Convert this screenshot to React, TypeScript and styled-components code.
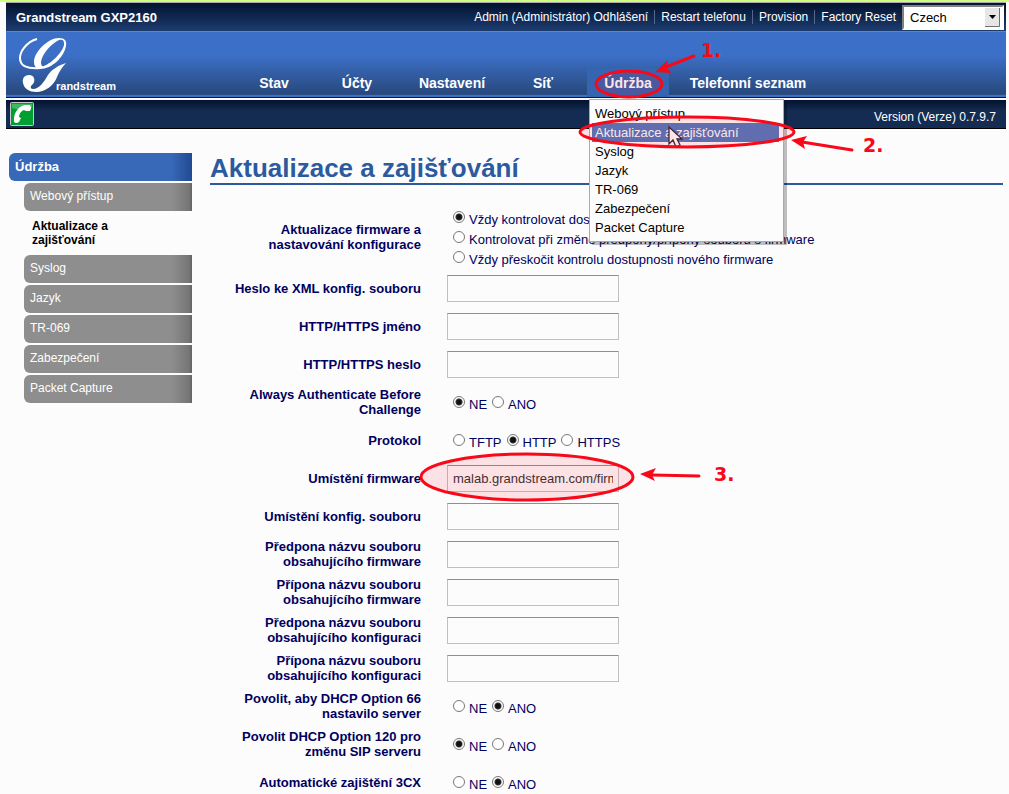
import React from 'react';
import styled, { createGlobalStyle } from 'styled-components';

const Global = createGlobalStyle`
  * { box-sizing: border-box; }
  body { margin: 0; background: #fcfcfc; font-family: "Liberation Sans", Arial, sans-serif; font-size: 13px; line-height: 15px; color: #000060; }
  button, input, select { font: inherit; }
`;

const Page = styled.div`
  position: relative;
  height: 100vh;
  overflow: hidden;
  padding: 0 3px 0 6px;
  border-top: 2px solid #ccff80;
`;

const TopBar = styled.header`
  display: flex;
  align-items: center;
  height: 29px;
  padding: 0 2px 0 10px;
  border-top: 1px solid #b0a8b0;
  color: #fff;
  background: linear-gradient(#03122e, #1c3c70);
`;

const Model = styled.strong`
  flex: 1;
`;

const TopLinks = styled.nav`
  display: flex;
  align-items: center;
  font-size: 12px;
  margin-right: 6px;
`;

const TopLink = styled.a`
  color: #fff;
  line-height: 14px;
  text-decoration: none;
  & + & { margin-left: 6px; padding-left: 6px; border-left: 1px solid #55688a; }
`;

const LanguageBox = styled.div`
  display: grid;
  grid-template-columns: 1fr 17px;
  align-items: center;
  width: 102px;
  height: 25px;
  border: 2px solid;
  border-color: #808080 #fff #fff #808080;
  background: #fff;
`;

const Language = styled.select`
  grid-area: 1 / 1 / 2 / 3;
  appearance: none;
  height: 21px;
  padding: 0 6px;
  border: 0;
  border-radius: 0;
  background: transparent;
  color: #000;
`;

const DropArrow = styled.svg`
  grid-area: 1 / 2;
  display: block;
  width: 15px;
  height: 19px;
  pointer-events: none;
`;

const NavBar = styled.div`
  display: flex;
  align-items: flex-end;
  height: 67px;
  border-top: 1px solid #5585d8;
  border-bottom: 1px solid #081838;
  background: linear-gradient(#3c70c8 0%, #3c70c8 35%, #28487c 96%, #3c70c8 97%);
`;

const Logo = styled.svg`
  display: block;
  width: 110px;
  height: 65px;
`;

const Tabs = styled.nav`
  display: flex;
  margin-left: 123px;
`;

const TabWrap = styled.div`
  position: relative;
`;

const Tab = styled.button<{ $w: number; $open?: boolean }>`
  width: ${p => p.$w}px;
  height: 29px;
  padding: 2px 0 0;
  border: 0;
  color: #fff;
  font-size: 14px;
  font-weight: bold;
  background: ${p => (p.$open ? '#3565b0' : 'transparent')};
`;

const Menu = styled.ul`
  position: absolute;
  z-index: 2;
  top: 31px;
  left: 2px;
  width: 195px;
  margin: 0;
  padding: 4px 4px 4px 2px;
  list-style: none;
  border: 1px solid #aaa;
  background: #fcfcfc;
  box-shadow: 3px 3px 0 rgba(0, 0, 0, 0.25);
`;

const MenuLink = styled.a<{ $active?: boolean }>`
  display: block;
  padding: 0 3px;
  line-height: 19px;
  text-decoration: none;
  color: ${p => (p.$active ? '#fff' : '#000')};
  background: ${p => (p.$active ? '#4f7ac0' : 'transparent')};
`;

const StatusBar = styled.div`
  display: flex;
  align-items: center;
  justify-content: space-between;
  height: 29px;
  margin-top: 2px;
  padding: 0 10px 0 4px;
  color: #fff;
  border-bottom: 1px solid #000;
  background: linear-gradient(#03122e, #152c52 40%);
`;

const Version = styled.span`
  padding-top: 6px;
  font-size: 12px;
`;

const Body = styled.div`
  display: flex;
  padding: 24px 3px 0;
`;

const Side = styled.aside`
  flex: none;
  width: 183px;
  margin-right: 18px;
`;

const SideTitle = styled.h2`
  margin: 0 0 2px;
  padding: 0 6px;
  font-size: 13px;
  line-height: 28px;
  color: #fff;
  border-radius: 6px 0 0 6px;
  background: linear-gradient(90deg, #3868b8 89%, #214a90);
`;

const SideLink = styled.a<{ $current?: boolean }>`
  display: block;
  margin: 0 0 2px 15px;
  font-size: 12px;
  text-decoration: none;
  ${p => p.$current
    ? 'padding: 6px 60px 6px 8px; font-weight: bold; line-height: 14px; color: #000;'
    : 'padding: 0 6px 2px; line-height: 26px; color: #fff; border-radius: 6px 0 0 6px; border-right: 2px solid #686868; background: linear-gradient(90deg, #8e8e8e 89%, #747474);'}
`;

const Main = styled.main`
  flex: 1;
  min-width: 0;
`;

const Title = styled.h1`
  margin: 0 0 23px;
  font-size: 26px;
  line-height: 30px;
  color: #2c5a9f;
  border-bottom: 2px solid #2c5a9f;
`;

const Row = styled.div<{ $tall?: boolean }>`
  display: grid;
  grid-template-columns: 211px 1fr;
  column-gap: 26px;
  align-items: center;
  min-height: ${p => (p.$tall ? 61 : 38)}px;
`;

const Label = styled.label<{ $tall?: boolean }>`
  padding-bottom: ${p => (p.$tall ? 4 : 0)}px;
  text-align: right;
  font-weight: bold;
`;

const Field = styled.input`
  width: 172px;
  height: 27px;
  padding: 0 5px;
  border: 1px solid #c0c0c0;
  border-top-color: #909090;
  border-radius: 0;
  background: #fcfcfc;
  color: #333;
`;

const Choices = styled.div<{ $column?: boolean }>`
  display: flex;
  flex-direction: ${p => (p.$column ? 'column' : 'row')};
  column-gap: 5px;
  padding: ${p => (p.$column ? 0 : 4)}px 0 0 6px;
`;

const Choice = styled.label`
  display: flex;
  align-items: flex-start;
  height: 20px;
  line-height: 22px;
  white-space: nowrap;
`;

const Radio = styled.input`
  appearance: none;
  width: 12px;
  height: 12px;
  margin: 2px 4px 0 0;
  border: 1px solid #777;
  border-radius: 50%;
  background: #fff;
  &:checked { background: radial-gradient(circle, #111 0 2px, #333 3px, #fff 4px); }
`;

const Marks = styled.svg`
  position: absolute;
  z-index: 3;
  top: -2px;
  left: 0;
  width: 900px;
  height: 520px;
  pointer-events: none;
`;

const menu = ['Webový přístup', 'Aktualizace a zajišťování', 'Syslog', 'Jazyk', 'TR-069', 'Zabezpečení', 'Packet Capture'];

type Item = { label: string; id: string; value?: string; options?: string[]; checked?: number; column?: boolean };

const rows: Item[] = [
  { id: 'upgrade', label: 'Aktualizace firmware a nastavování konfigurace', column: true, checked: 0, options: ['Vždy kontrolovat dostupnost nového firmware', 'Kontrolovat při změně předpony/přípony souborů s firmware', 'Vždy přeskočit kontrolu dostupnosti nového firmware'] },
  { id: 'xml', label: 'Heslo ke XML konfig. souboru' },
  { id: 'user', label: 'HTTP/HTTPS jméno' },
  { id: 'pass', label: 'HTTP/HTTPS heslo' },
  { id: 'auth', label: 'Always Authenticate Before Challenge', options: ['NE', 'ANO'], checked: 0 },
  { id: 'protocol', label: 'Protokol', options: ['TFTP', 'HTTP', 'HTTPS'], checked: 1 },
  { id: 'fw', label: 'Umístění firmware', value: 'malab.grandstream.com/firmware' },
  { id: 'cfg', label: 'Umístění konfig. souboru' },
  { id: 'fwpre', label: 'Předpona názvu souboru obsahujícího firmware' },
  { id: 'fwpost', label: 'Přípona názvu souboru obsahujícího firmware' },
  { id: 'cfgpre', label: 'Předpona názvu souboru obsahujícího konfiguraci' },
  { id: 'cfgpost', label: 'Přípona názvu souboru obsahujícího konfiguraci' },
  { id: 'dhcp66', label: 'Povolit, aby DHCP Option 66 nastavilo server', options: ['NE', 'ANO'], checked: 1 },
  { id: 'dhcp120', label: 'Povolit DHCP Option 120 pro změnu SIP serveru', options: ['NE', 'ANO'], checked: 0 },
  { id: 'auto3cx', label: 'Automatické zajištění 3CX', options: ['NE', 'ANO'], checked: 1 },
];

export default function App() {
  return (
    <>
      <Global />
      <Page>
        <TopBar>
          <Model>Grandstream GXP2160</Model>
          <TopLinks>
            <TopLink href="#logout">Admin (Administrátor) Odhlášení</TopLink>
            <TopLink href="#restart">Restart telefonu</TopLink>
            <TopLink href="#provision">Provision</TopLink>
            <TopLink href="#reset">Factory Reset</TopLink>
          </TopLinks>
          <LanguageBox>
            <Language aria-label="Language"><option>Czech</option></Language>
            <DropArrow viewBox="0 0 15 19" aria-hidden="true">
              <rect width="15" height="19" fill="#e6e6e6" />
              <path d="M14.5 0V18.5H0" fill="none" stroke="#707070" />
              <path d="M4 7H11L7.5 11Z" fill="#000" />
            </DropArrow>
          </LanguageBox>
        </TopBar>
        <NavBar>
          <Logo viewBox="0 0 110 65" role="img" aria-label="Grandstream">
            <path d="M31 7C20 10 14 20 14 26C14 34 21 37 34 36" fill="none" stroke="#fff" strokeWidth="2" />
            <path fillRule="evenodd" d="M28 30C28 20 42 6 53 6C59 6 61 9 60 14C58 25 46 37 34 37C30 37 28 34 28 30ZM38 34C46 31 59 18 58 11C58 8 56 7 53 8C45 12 36 22 35 30C35 33 36 35 38 34Z" fill="#fff" />
            <path d="M60 31C53 33 45 38 42 43C38 50 33 57 27 57C24 57 24 54 27 52C30 48 28 43 23 43C18 43 16 47 17 51C18 57 24 60 30 60C40 60 48 53 51 45C53 40 56 35 60 31Z" fill="#fff" />
            <text x="50" y="58" fill="#fff" fontFamily="Liberation Sans, sans-serif" fontSize="11" fontWeight="bold">randstream</text>
          </Logo>
          <Tabs>
            <Tab $w={70}>Stav</Tab>
            <Tab $w={96}>Účty</Tab>
            <Tab $w={94}>Nastavení</Tab>
            <Tab $w={88}>Síť</Tab>
            <TabWrap>
              <Tab $w={82} $open>Údržba</Tab>
              <Menu>
                {menu.map((m, i) => <li key={m}><MenuLink href="#m" $active={i === 1}>{m}</MenuLink></li>)}
              </Menu>
            </TabWrap>
            <Tab $w={158}>Telefonní seznam</Tab>
          </Tabs>
        </NavBar>
        <StatusBar>
          <svg width="24" height="24" viewBox="0 0 24 24" role="img" aria-label="Phone">
            <rect x="0.5" y="0.5" width="23" height="23" rx="1" fill="#00a030" stroke="#c8c8c8" />
            <path d="M2 2H22V6Q12 9 2 6Z" fill="#40b860" />
            <path d="M4 20C3 12 8 4 15 3H20Q22 6 20 9H16L14 8C11 9 9 12 9 15L11 16L9 20Q6 22 4 20Z" fill="#fff" />
          </svg>
          <Version>Version (Verze) 0.7.9.7</Version>
        </StatusBar>
        <Body>
          <Side>
            <SideTitle>Údržba</SideTitle>
            {menu.map((m, i) => <SideLink key={m} href="#s" $current={i === 1}>{m}</SideLink>)}
          </Side>
          <Main>
            <Title>Aktualizace a zajišťování</Title>
            {rows.map(r => (
              <Row key={r.id} $tall={r.column}>
                <Label as={r.options ? 'span' : 'label'} $tall={r.column} id={r.id + '-label'} htmlFor={r.options ? undefined : r.id}>{r.label}</Label>
                {r.options ? (
                  <Choices $column={r.column} role="radiogroup" aria-labelledby={r.id + '-label'}>
                    {r.options.map((o, i) => (
                      <Choice key={o}><Radio type="radio" name={r.id} defaultChecked={i === r.checked} />{o}</Choice>
                    ))}
                  </Choices>
                ) : <Field id={r.id} defaultValue={r.value} />}
              </Row>
            ))}
          </Main>
        </Body>
        <Marks viewBox="0 0 900 520" aria-hidden="true">
          <path d="M669 127V144L673 140L676 147L680 145L677 139H682Z" fill="#fff" stroke="#302838" strokeWidth="1.3" />
          <g fill="#ff0010" fillOpacity="0.1" stroke="#f80818" strokeWidth="3">
            <ellipse cx="629" cy="84" rx="33" ry="13" />
            <ellipse cx="687" cy="132" rx="107" ry="15" />
            <ellipse cx="527" cy="477" rx="106" ry="23" />
          </g>
          <g fill="none" stroke="#f80818" strokeWidth="3" strokeLinecap="round">
            <path d="M694 56L666 67" />
            <path d="M852 150L802 142" />
            <path d="M699 476L652 475" />
          </g>
          <g fill="#f80818">
            <path d="M655 72L668 60L666 67L671 73Z" />
            <path d="M791 140L807 136L803 142L805 149Z" />
            <path d="M640 474L656 468L652 475L655 481Z" />
          </g>
          <g fill="#f80818" fontFamily="DejaVu Sans, sans-serif" fontSize="19" fontWeight="bold">
            <text x="701" y="57">1.</text>
            <text x="863" y="152">2.</text>
            <text x="714" y="481">3.</text>
          </g>
        </Marks>
      </Page>
    </>
  );
}
